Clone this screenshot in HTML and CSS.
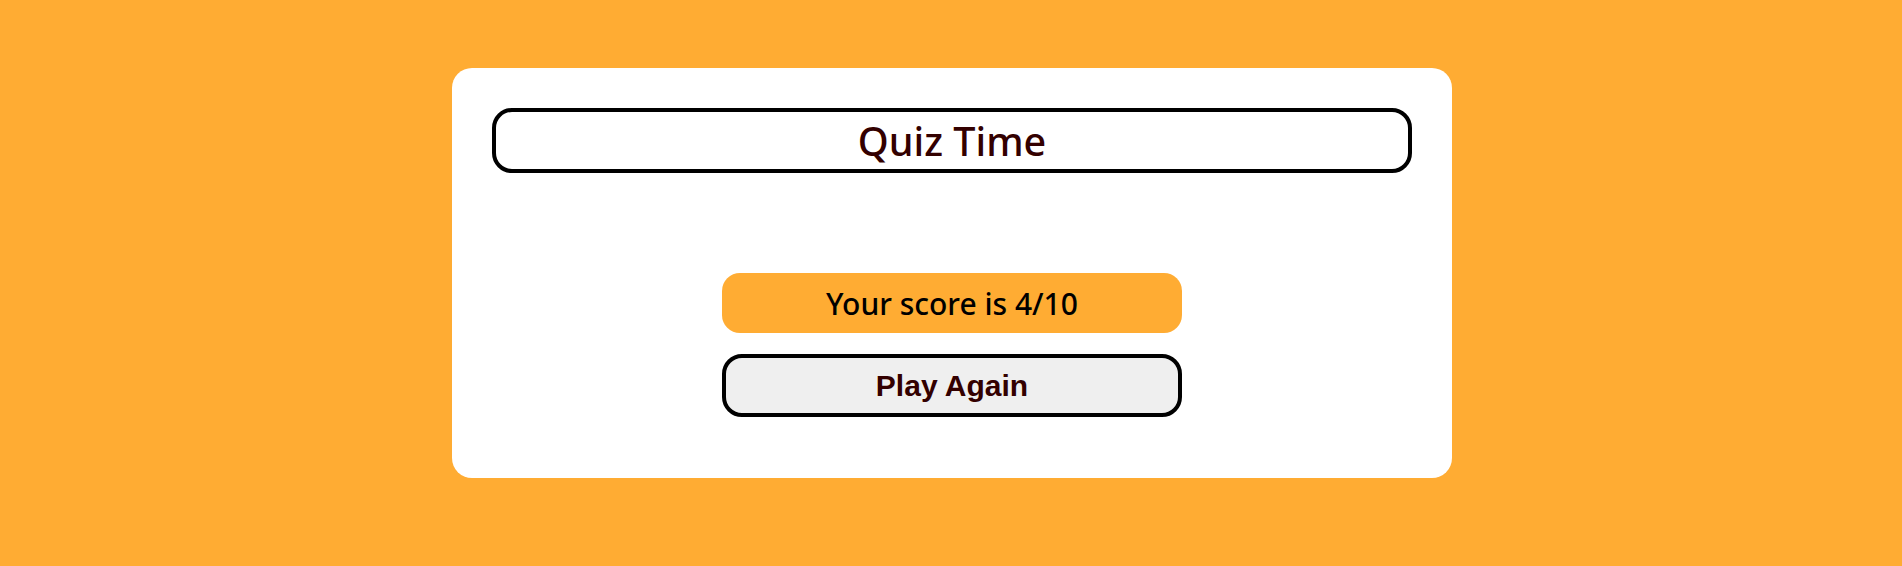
FILE: index.html
```html
<!DOCTYPE html>
<html lang="en">
<head>
<meta charset="utf-8">
<title>Quiz Time</title>
<link rel="stylesheet" href="styles.css">
</head>
<body>
<main class="page">
  <section class="card">
    <h1 class="title">Quiz Time</h1>
    <div class="result">
      <div class="score">Your score is 4/10</div>
      <button class="again" type="button">Play Again</button>
    </div>
  </section>
</main>
</body>
</html>
```

FILE: styles.css
```css
html, body {
  margin: 0;
  padding: 0;
  background: #ffac33;
  height: 100%;
}
.page {
  display: flex;
  justify-content: center;
  padding-top: 68px;
  padding-left: 2px;
}
.card {
  width: 1000px;
  height: 410px;
  box-sizing: border-box;
  background: #ffffff;
  border-radius: 20px;
  padding: 40px;
  display: flex;
  flex-direction: column;
  align-items: center;
}
.title {
  margin: 0;
  width: 100%;
  height: 65px;
  box-sizing: border-box;
  border: 4px solid #000;
  border-radius: 20px;
  display: flex;
  align-items: center;
  justify-content: center;
  font-family: "Noto Sans", "Open Sans", sans-serif;
  font-weight: 500;
  font-size: 39.5px;
  color: #330000;
}
.result {
  margin-top: 100px;
  display: flex;
  flex-direction: column;
  gap: 21px;
  width: 460px;
}
.score {
  height: 60px;
  background: #ffac33;
  border-radius: 18px;
  display: flex;
  align-items: center;
  justify-content: center;
  font-family: "Noto Sans", "Open Sans", sans-serif;
  font-weight: 500;
  font-size: 30px;
  color: #000;
}
.again {
  height: 63px;
  box-sizing: border-box;
  border: 4px solid #000;
  border-radius: 20px;
  background: #efefef;
  font-family: "Liberation Sans", Arial, sans-serif;
  font-weight: 700;
  font-size: 30px;
  color: #330000;
  padding: 0;
  cursor: pointer;
}
```
